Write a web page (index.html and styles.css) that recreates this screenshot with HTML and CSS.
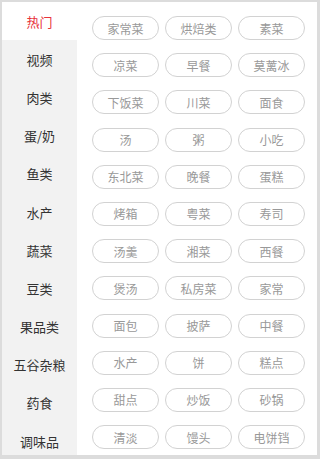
FILE: index.html
```html
<!DOCTYPE html>
<html lang="zh">
<head>
<meta charset="utf-8">
<link rel="stylesheet" href="styles.css">
</head>
<body>
<div class="frame">
  <div class="side">
    <div class="cat active">热门</div>
    <div class="cat">视频</div>
    <div class="cat">肉类</div>
    <div class="cat">蛋/奶</div>
    <div class="cat">鱼类</div>
    <div class="cat">水产</div>
    <div class="cat">蔬菜</div>
    <div class="cat">豆类</div>
    <div class="cat">果品类</div>
    <div class="cat">五谷杂粮</div>
    <div class="cat">药食</div>
    <div class="cat">调味品</div>
  </div>
  <div class="main">
    <div class="tags">
      <span class="tag">家常菜</span><span class="tag">烘焙类</span><span class="tag">素菜</span>
      <span class="tag">凉菜</span><span class="tag">早餐</span><span class="tag">莫蓠冰</span>
      <span class="tag">下饭菜</span><span class="tag">川菜</span><span class="tag">面食</span>
      <span class="tag">汤</span><span class="tag">粥</span><span class="tag">小吃</span>
      <span class="tag">东北菜</span><span class="tag">晚餐</span><span class="tag">蛋糕</span>
      <span class="tag">烤箱</span><span class="tag">粤菜</span><span class="tag">寿司</span>
      <span class="tag">汤羹</span><span class="tag">湘菜</span><span class="tag">西餐</span>
      <span class="tag">煲汤</span><span class="tag">私房菜</span><span class="tag">家常</span>
      <span class="tag">面包</span><span class="tag">披萨</span><span class="tag">中餐</span>
      <span class="tag">水产</span><span class="tag">饼</span><span class="tag">糕点</span>
      <span class="tag">甜点</span><span class="tag">炒饭</span><span class="tag">砂锅</span>
      <span class="tag">清淡</span><span class="tag">馒头</span><span class="tag">电饼铛</span>
    </div>
  </div>
</div>
</body>
</html>
```
FILE: styles.css
```css
html, body {
  margin: 0;
  padding: 0;
}
body {
  background: #dcdcdc;
  width: 320px;
  height: 459px;
  box-sizing: border-box;
  padding: 2px 3px 4px 2px;
  font-family: "Noto Sans CJK SC", "Noto Sans", sans-serif;
  overflow: hidden;
}
.frame {
  display: flex;
  height: 453px;
  background: #fff;
  overflow: hidden;
}
.side {
  width: 75px;
  flex: none;
  background: #f2f2f2;
  display: flex;
  flex-direction: column;
}
.cat {
  height: 38.2px;
  flex: none;
  display: flex;
  align-items: center;
  justify-content: center;
  font-size: 13px;
  color: #333;
}
.cat.active {
  background: #fff;
  color: #e8333a;
}
.main {
  flex: 1;
  padding: 14px 0 0 15px;
}
.tags {
  display: grid;
  grid-template-columns: repeat(3, 67px);
  column-gap: 6px;
  row-gap: 13.2px;
}
.tag {
  height: 24px;
  box-sizing: border-box;
  border: 1px solid #d2d2d2;
  border-radius: 12px;
  display: flex;
  align-items: center;
  justify-content: center;
  font-size: 12px;
  color: #999;
}
```
